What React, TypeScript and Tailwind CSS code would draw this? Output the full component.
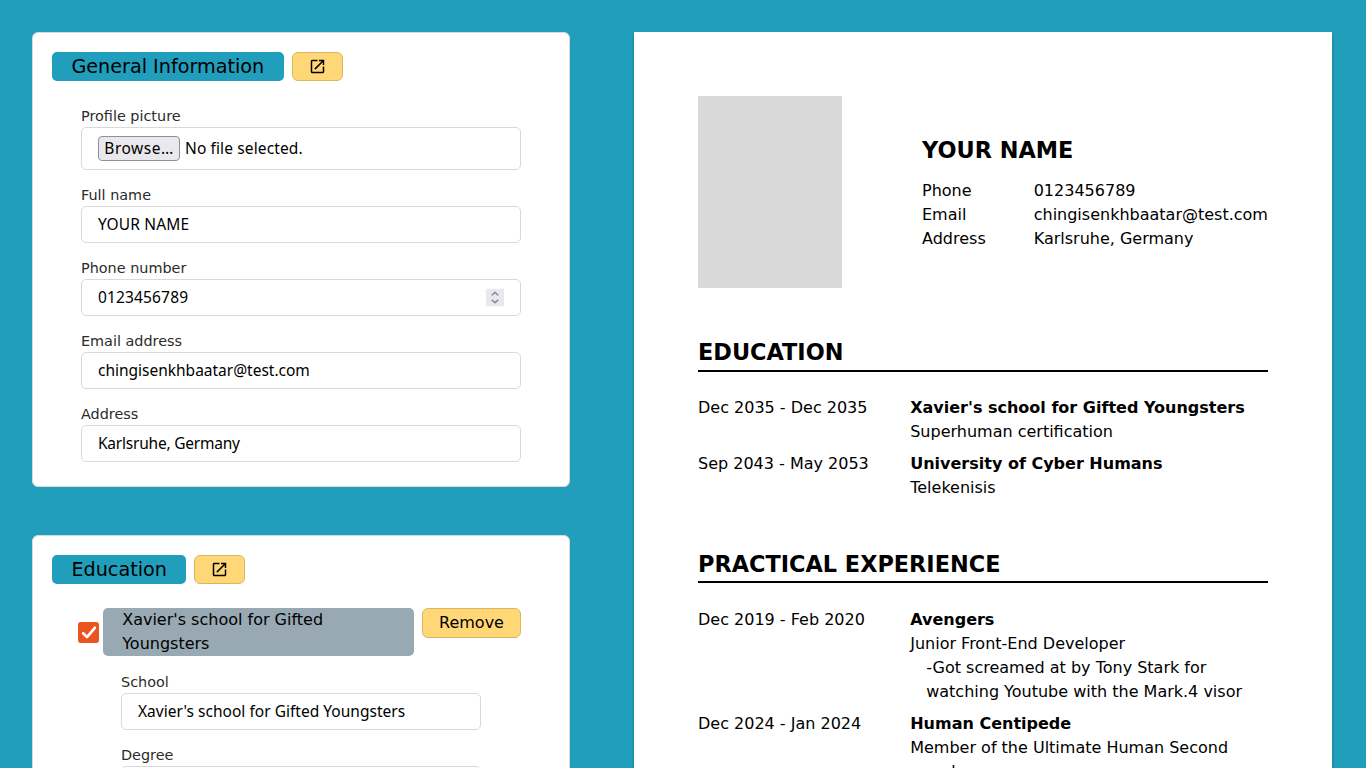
import React from "react";

const ui = "font-['Noto_Sans',sans-serif] text-[15.5px] text-black";

function OpenIcon() {
  return (
    <svg className="-translate-x-[0.5px] -translate-y-[0.5px]" width="18" height="18" viewBox="0 0 24 24" fill="currentColor">
      <path d="M19 19H5V5h7V3H5c-1.11 0-2 .9-2 2v14c0 1.1.89 2 2 2h14c1.1 0 2-.9 2-2v-7h-2v7zM14 3v2h3.59l-9.83 9.83 1.41 1.41L19 6.41V10h2V3h-7z" />
    </svg>
  );
}

function Header({ title, width }: { title: string; width: string }) {
  return (
    <div className="flex h-[29px] gap-2">
      <h2 className={`${width} whitespace-nowrap rounded-[5px] bg-[#219ebc] pl-[19.4px] text-[19.2px] leading-[29px]`}>{title}</h2>
      <button className="flex w-[51px] items-center justify-center rounded-[6px] border border-[#d9b75f] bg-[#ffd777]">
        <OpenIcon />
      </button>
    </div>
  );
}

function Label({ text }: { text: string }) {
  return <div className="h-[22px] text-[14.4px] leading-[22px] text-[#2b2b2b]">{text}</div>;
}

function Field({ label, value, spacing, stepper }: { label: string; value: string; spacing: string; stepper?: boolean }) {
  return (
    <div>
      <Label text={label} />
      <div className={`flex h-[37px] items-center justify-between rounded-[5px] border border-[#d9d9d9] bg-white px-4 ${ui}`}>
        <span className={`whitespace-nowrap ${spacing}`}>{value}</span>
        {stepper && (
          <svg className="-translate-y-[0.5px]" width="18" height="18" viewBox="0 0 18 18" fill="none" stroke="#8f8f9d" strokeWidth="1.6">
            <rect width="18" height="18" fill="#e9e9ed" stroke="none" />
            <path d="M5.7 6.8 9 3.9l3.3 2.9M5.7 11.3 9 14.2l3.3-2.9" />
          </svg>
        )}
      </div>
    </div>
  );
}

function Section({ title, children }: { title: string; children: React.ReactNode }) {
  return (
    <section>
      <h2 className="border-b-2 border-black text-[22.4px] font-bold leading-[33.6px]">{title}</h2>
      <div className="mt-[24.4px] flex flex-col gap-2">{children}</div>
    </section>
  );
}

function Entry({ date, name, role, children }: { date: string; name: string; role: string; children?: React.ReactNode }) {
  return (
    <div className="flex leading-6">
      <div className="w-[212.2px] shrink-0">{date}</div>
      <div className="flex-1">
        <div className="font-bold">{name}</div>
        <div>{role}</div>
        {children}
      </div>
    </div>
  );
}

export default function App() {
  return (
    <div className="flex h-screen items-start overflow-hidden bg-[#219ebc] pl-8 pt-8 font-['DejaVu_Sans',sans-serif] text-base text-black">
      <div className="flex w-[538px] shrink-0 flex-col gap-12">
        <div className="h-[455px] rounded-[6px] border border-[#d9d9d9] bg-white px-[19px] pt-[19px]">
          <Header title="General Information" width="w-[232px]" />
          <div className="ml-[29px] mt-6 flex w-[440px] flex-col gap-[14px]">
            <div>
              <Label text="Profile picture" />
              <div className={`flex h-[43px] items-center gap-[5px] rounded-[5px] border border-[#d9d9d9] px-4 ${ui}`}>
                <button className="flex h-[25px] w-[82px] items-start justify-center whitespace-nowrap rounded-[4px] border border-[#8f8f9d] bg-[#e9e9ed] leading-[22px] tracking-[0.5px]">Browse…</button>
                <span className="whitespace-nowrap tracking-[0.12px]">No file selected.</span>
              </div>
            </div>
            <Field label="Full name" value="YOUR NAME" spacing="tracking-[0.15px]" />
            <Field label="Phone number" value="0123456789" spacing="tracking-[0.15px]" stepper />
            <Field label="Email address" value="chingisenkhbaatar@test.com" spacing="tracking-[-0.01px]" />
            <Field label="Address" value="Karlsruhe, Germany" spacing="tracking-[-0.22px]" />
          </div>
        </div>
        <div className="h-[600px] rounded-[6px] border border-[#d9d9d9] bg-white px-[19px] pt-[19px]">
          <Header title="Education" width="w-[134px]" />
          <div className="ml-[26px] mt-6 flex w-[443px] items-start">
            <svg className="mt-[14px] shrink-0" width="21" height="21" viewBox="0 0 21 21" fill="none">
              <rect width="21" height="21" rx="3" fill="#e95420" />
              <path d="m5.2 11.2 3.8 3.9 7.8-9.3" stroke="#fff" strokeWidth="2.7" strokeLinecap="round" strokeLinejoin="round" />
            </svg>
            <div className="ml-1 h-12 w-[311px] rounded-[5px] bg-[#98a9b3] px-[19.2px] leading-6">Xavier's school for Gifted Youngsters</div>
            <button className="ml-2 flex h-[30px] w-[99px] items-start justify-center rounded-[6px] border border-[#d9b75f] bg-[#ffd777] leading-[28px]">Remove</button>
          </div>
          <div className="ml-[69px] mt-[15px] flex w-[360px] flex-col gap-[14px]">
            <Field label="School" value="Xavier's school for Gifted Youngsters" spacing="tracking-[0.02px]" />
            <Field label="Degree" value="Superhuman certification" spacing="tracking-[0px]" />
          </div>
        </div>
      </div>
      <main className="ml-16 h-[987px] w-[698px] shrink-0 bg-white p-16 shadow-[0_2px_3px_rgba(0,0,0,0.3)]">
        <div className="flex h-48 gap-20">
          <div className="w-36 bg-[#d9d9d9]" />
          <div className="pt-[37px]">
            <h1 className="h-[34px] text-[22.4px] font-bold leading-[34px]">YOUR NAME</h1>
            <div className="mt-3 grid grid-cols-[111.7px_auto] leading-6">
              <span>Phone</span><span>0123456789</span>
              <span>Email</span><span>chingisenkhbaatar@test.com</span>
              <span>Address</span><span>Karlsruhe, Germany</span>
            </div>
          </div>
        </div>
        <div className="mt-12 flex flex-col gap-[47.6px]">
          <Section title="EDUCATION">
            <Entry date="Dec 2035 - Dec 2035" name="Xavier's school for Gifted Youngsters" role="Superhuman certification" />
            <Entry date="Sep 2043 - May 2053" name="University of Cyber Humans" role="Telekenisis" />
          </Section>
          <Section title="PRACTICAL EXPERIENCE">
            <Entry date="Dec 2019 - Feb 2020" name="Avengers" role="Junior Front-End Developer">
              <p className="pl-4">-Got screamed at by Tony Stark for watching Youtube with the Mark.4 visor</p>
            </Entry>
            <Entry date="Dec 2024 - Jan 2024" name="Human Centipede" role="Member of the Ultimate Human Second member" />
          </Section>
        </div>
      </main>
    </div>
  );
}
